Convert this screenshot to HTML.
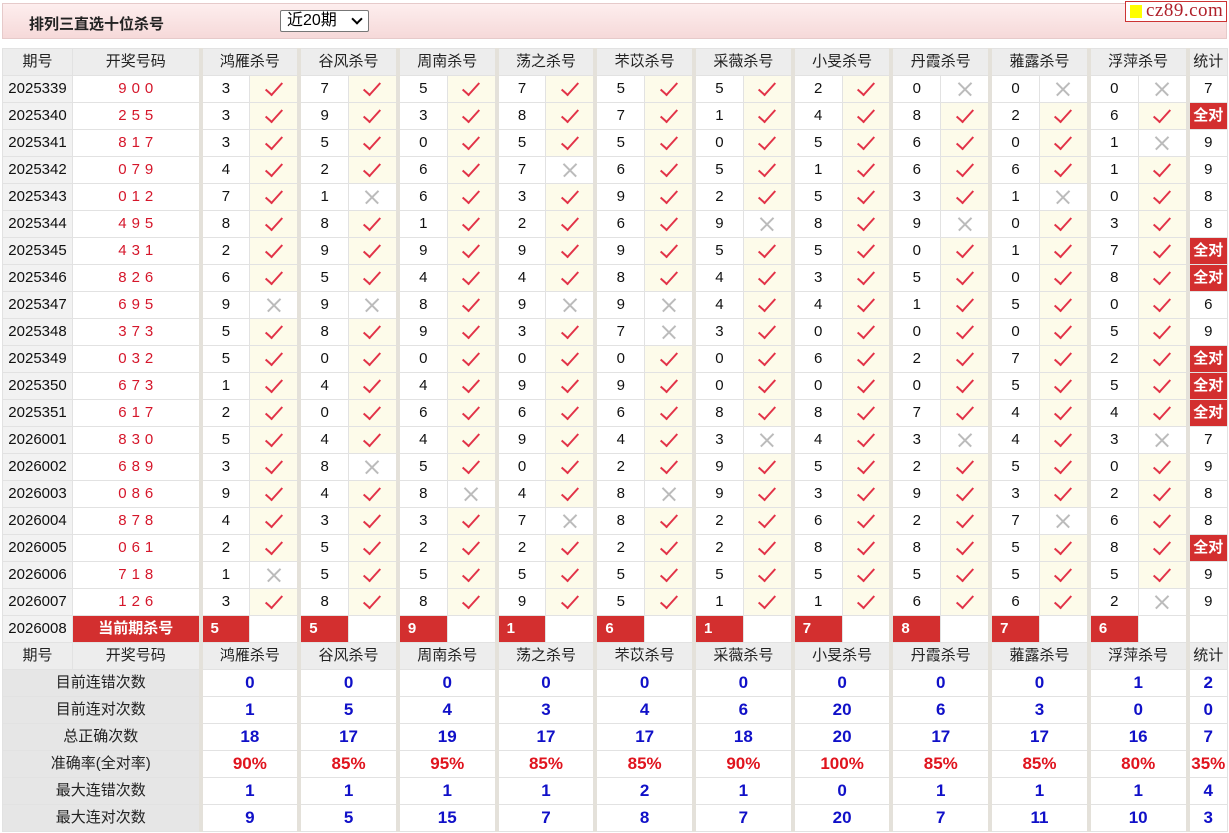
<!DOCTYPE html>
<html><head><meta charset="utf-8"><style>
body{margin:0;background:#fff;font-family:"Liberation Sans","Noto Sans CJK SC",sans-serif;width:1229px;height:833px;overflow:hidden;position:relative}
.bar{position:absolute;left:2px;top:3px;width:1225px;height:36px;background:linear-gradient(#fdeeee,#f6d9d9);border:1px solid #e6caca;box-sizing:border-box}
.bar b{position:absolute;left:26px;top:9px;font-size:15px;color:#222}
.sel{position:absolute;left:277px;top:6px;width:89px;height:22px;border:1px solid #777;border-radius:2px;background:#fff;box-sizing:border-box;font-size:16px;line-height:20px;padding-left:6px;color:#000}
.sel i{position:absolute;right:7px;top:4px;width:6px;height:6px;border-right:2px solid #000;border-bottom:2px solid #000;transform:rotate(45deg)}
.logo{position:absolute;left:1125px;top:1px;width:102px;height:21px;border:1px solid #c33;background:#fff;box-sizing:border-box;font-family:"Liberation Serif",serif;font-size:19px;color:#b0202a;line-height:18px;padding-left:20px;letter-spacing:0.5px}
.logo:before{content:"";position:absolute;left:4px;top:3px;width:12px;height:13px;background:#ff0}
table{position:absolute;left:2px;top:48px;border-collapse:collapse;table-layout:fixed;width:1225px}
tr{height:27px}
td{height:26px;line-height:20px;padding:0;border:1px solid #e2e2e2;text-align:center;font-size:15px;color:#111;white-space:nowrap;overflow:hidden;position:relative}
tr.h td{background:#ededed;color:#222}
td.p{background:#f2f2f2}
td.k{color:#d5162a;letter-spacing:5px;padding-left:5px}
td.n{border-left:4px solid #e4e1da}
td.y{background:#fdfbea}
td.y:before{content:"";position:absolute;left:50%;top:50%;width:7px;height:15px;border-right:2px solid #e23348;border-bottom:2px solid #e23348;transform:translate(-50%,-62%) rotate(42deg)}
td.x:before,td.x:after{content:"";position:absolute;left:50%;top:50%;width:18px;height:1.5px;background:#bbb;transform:translate(-50%,-50%) rotate(45deg)}
td.x:after{transform:translate(-50%,-50%) rotate(-45deg)}
td.q{background:#d32f2f;color:#fff;font-weight:bold;text-align:left;padding-left:8px}
td.a{background:#d32f2f;color:#fff;font-weight:bold}
td.c{background:#d32f2f;color:#fff;font-weight:bold}
td.l{background:#e6e6e6;color:#222}
td.s{border-left:4px solid #e4e1da;color:#1010c8;font-weight:bold;font-size:17px}
td.r{color:#e0141e}
</style></head><body>
<div class="bar"><b>排列三直选十位杀号</b><div class="sel">近20期<i></i></div></div>
<div class="logo">cz89.com</div>
<table>
<colgroup><col style="width:70px"><col style="width:128px"><col span="20" style="width:49.35px"><col style="width:40px"></colgroup>
<tr class="h"><td>期号</td><td>开奖号码</td><td class="n" colspan="2">鸿雁杀号</td><td class="n" colspan="2">谷风杀号</td><td class="n" colspan="2">周南杀号</td><td class="n" colspan="2">荡之杀号</td><td class="n" colspan="2">芣苡杀号</td><td class="n" colspan="2">采薇杀号</td><td class="n" colspan="2">小旻杀号</td><td class="n" colspan="2">丹霞杀号</td><td class="n" colspan="2">蕥露杀号</td><td class="n" colspan="2">浮萍杀号</td><td class="n">统计</td></tr>
<tr><td class="p">2025339</td><td class="k">900</td><td class="n">3</td><td class="y"></td><td class="n">7</td><td class="y"></td><td class="n">5</td><td class="y"></td><td class="n">7</td><td class="y"></td><td class="n">5</td><td class="y"></td><td class="n">5</td><td class="y"></td><td class="n">2</td><td class="y"></td><td class="n">0</td><td class="x"></td><td class="n">0</td><td class="x"></td><td class="n">0</td><td class="x"></td><td class="n">7</td></tr>
<tr><td class="p">2025340</td><td class="k">255</td><td class="n">3</td><td class="y"></td><td class="n">9</td><td class="y"></td><td class="n">3</td><td class="y"></td><td class="n">8</td><td class="y"></td><td class="n">7</td><td class="y"></td><td class="n">1</td><td class="y"></td><td class="n">4</td><td class="y"></td><td class="n">8</td><td class="y"></td><td class="n">2</td><td class="y"></td><td class="n">6</td><td class="y"></td><td class="n a">全对</td></tr>
<tr><td class="p">2025341</td><td class="k">817</td><td class="n">3</td><td class="y"></td><td class="n">5</td><td class="y"></td><td class="n">0</td><td class="y"></td><td class="n">5</td><td class="y"></td><td class="n">5</td><td class="y"></td><td class="n">0</td><td class="y"></td><td class="n">5</td><td class="y"></td><td class="n">6</td><td class="y"></td><td class="n">0</td><td class="y"></td><td class="n">1</td><td class="x"></td><td class="n">9</td></tr>
<tr><td class="p">2025342</td><td class="k">079</td><td class="n">4</td><td class="y"></td><td class="n">2</td><td class="y"></td><td class="n">6</td><td class="y"></td><td class="n">7</td><td class="x"></td><td class="n">6</td><td class="y"></td><td class="n">5</td><td class="y"></td><td class="n">1</td><td class="y"></td><td class="n">6</td><td class="y"></td><td class="n">6</td><td class="y"></td><td class="n">1</td><td class="y"></td><td class="n">9</td></tr>
<tr><td class="p">2025343</td><td class="k">012</td><td class="n">7</td><td class="y"></td><td class="n">1</td><td class="x"></td><td class="n">6</td><td class="y"></td><td class="n">3</td><td class="y"></td><td class="n">9</td><td class="y"></td><td class="n">2</td><td class="y"></td><td class="n">5</td><td class="y"></td><td class="n">3</td><td class="y"></td><td class="n">1</td><td class="x"></td><td class="n">0</td><td class="y"></td><td class="n">8</td></tr>
<tr><td class="p">2025344</td><td class="k">495</td><td class="n">8</td><td class="y"></td><td class="n">8</td><td class="y"></td><td class="n">1</td><td class="y"></td><td class="n">2</td><td class="y"></td><td class="n">6</td><td class="y"></td><td class="n">9</td><td class="x"></td><td class="n">8</td><td class="y"></td><td class="n">9</td><td class="x"></td><td class="n">0</td><td class="y"></td><td class="n">3</td><td class="y"></td><td class="n">8</td></tr>
<tr><td class="p">2025345</td><td class="k">431</td><td class="n">2</td><td class="y"></td><td class="n">9</td><td class="y"></td><td class="n">9</td><td class="y"></td><td class="n">9</td><td class="y"></td><td class="n">9</td><td class="y"></td><td class="n">5</td><td class="y"></td><td class="n">5</td><td class="y"></td><td class="n">0</td><td class="y"></td><td class="n">1</td><td class="y"></td><td class="n">7</td><td class="y"></td><td class="n a">全对</td></tr>
<tr><td class="p">2025346</td><td class="k">826</td><td class="n">6</td><td class="y"></td><td class="n">5</td><td class="y"></td><td class="n">4</td><td class="y"></td><td class="n">4</td><td class="y"></td><td class="n">8</td><td class="y"></td><td class="n">4</td><td class="y"></td><td class="n">3</td><td class="y"></td><td class="n">5</td><td class="y"></td><td class="n">0</td><td class="y"></td><td class="n">8</td><td class="y"></td><td class="n a">全对</td></tr>
<tr><td class="p">2025347</td><td class="k">695</td><td class="n">9</td><td class="x"></td><td class="n">9</td><td class="x"></td><td class="n">8</td><td class="y"></td><td class="n">9</td><td class="x"></td><td class="n">9</td><td class="x"></td><td class="n">4</td><td class="y"></td><td class="n">4</td><td class="y"></td><td class="n">1</td><td class="y"></td><td class="n">5</td><td class="y"></td><td class="n">0</td><td class="y"></td><td class="n">6</td></tr>
<tr><td class="p">2025348</td><td class="k">373</td><td class="n">5</td><td class="y"></td><td class="n">8</td><td class="y"></td><td class="n">9</td><td class="y"></td><td class="n">3</td><td class="y"></td><td class="n">7</td><td class="x"></td><td class="n">3</td><td class="y"></td><td class="n">0</td><td class="y"></td><td class="n">0</td><td class="y"></td><td class="n">0</td><td class="y"></td><td class="n">5</td><td class="y"></td><td class="n">9</td></tr>
<tr><td class="p">2025349</td><td class="k">032</td><td class="n">5</td><td class="y"></td><td class="n">0</td><td class="y"></td><td class="n">0</td><td class="y"></td><td class="n">0</td><td class="y"></td><td class="n">0</td><td class="y"></td><td class="n">0</td><td class="y"></td><td class="n">6</td><td class="y"></td><td class="n">2</td><td class="y"></td><td class="n">7</td><td class="y"></td><td class="n">2</td><td class="y"></td><td class="n a">全对</td></tr>
<tr><td class="p">2025350</td><td class="k">673</td><td class="n">1</td><td class="y"></td><td class="n">4</td><td class="y"></td><td class="n">4</td><td class="y"></td><td class="n">9</td><td class="y"></td><td class="n">9</td><td class="y"></td><td class="n">0</td><td class="y"></td><td class="n">0</td><td class="y"></td><td class="n">0</td><td class="y"></td><td class="n">5</td><td class="y"></td><td class="n">5</td><td class="y"></td><td class="n a">全对</td></tr>
<tr><td class="p">2025351</td><td class="k">617</td><td class="n">2</td><td class="y"></td><td class="n">0</td><td class="y"></td><td class="n">6</td><td class="y"></td><td class="n">6</td><td class="y"></td><td class="n">6</td><td class="y"></td><td class="n">8</td><td class="y"></td><td class="n">8</td><td class="y"></td><td class="n">7</td><td class="y"></td><td class="n">4</td><td class="y"></td><td class="n">4</td><td class="y"></td><td class="n a">全对</td></tr>
<tr><td class="p">2026001</td><td class="k">830</td><td class="n">5</td><td class="y"></td><td class="n">4</td><td class="y"></td><td class="n">4</td><td class="y"></td><td class="n">9</td><td class="y"></td><td class="n">4</td><td class="y"></td><td class="n">3</td><td class="x"></td><td class="n">4</td><td class="y"></td><td class="n">3</td><td class="x"></td><td class="n">4</td><td class="y"></td><td class="n">3</td><td class="x"></td><td class="n">7</td></tr>
<tr><td class="p">2026002</td><td class="k">689</td><td class="n">3</td><td class="y"></td><td class="n">8</td><td class="x"></td><td class="n">5</td><td class="y"></td><td class="n">0</td><td class="y"></td><td class="n">2</td><td class="y"></td><td class="n">9</td><td class="y"></td><td class="n">5</td><td class="y"></td><td class="n">2</td><td class="y"></td><td class="n">5</td><td class="y"></td><td class="n">0</td><td class="y"></td><td class="n">9</td></tr>
<tr><td class="p">2026003</td><td class="k">086</td><td class="n">9</td><td class="y"></td><td class="n">4</td><td class="y"></td><td class="n">8</td><td class="x"></td><td class="n">4</td><td class="y"></td><td class="n">8</td><td class="x"></td><td class="n">9</td><td class="y"></td><td class="n">3</td><td class="y"></td><td class="n">9</td><td class="y"></td><td class="n">3</td><td class="y"></td><td class="n">2</td><td class="y"></td><td class="n">8</td></tr>
<tr><td class="p">2026004</td><td class="k">878</td><td class="n">4</td><td class="y"></td><td class="n">3</td><td class="y"></td><td class="n">3</td><td class="y"></td><td class="n">7</td><td class="x"></td><td class="n">8</td><td class="y"></td><td class="n">2</td><td class="y"></td><td class="n">6</td><td class="y"></td><td class="n">2</td><td class="y"></td><td class="n">7</td><td class="x"></td><td class="n">6</td><td class="y"></td><td class="n">8</td></tr>
<tr><td class="p">2026005</td><td class="k">061</td><td class="n">2</td><td class="y"></td><td class="n">5</td><td class="y"></td><td class="n">2</td><td class="y"></td><td class="n">2</td><td class="y"></td><td class="n">2</td><td class="y"></td><td class="n">2</td><td class="y"></td><td class="n">8</td><td class="y"></td><td class="n">8</td><td class="y"></td><td class="n">5</td><td class="y"></td><td class="n">8</td><td class="y"></td><td class="n a">全对</td></tr>
<tr><td class="p">2026006</td><td class="k">718</td><td class="n">1</td><td class="x"></td><td class="n">5</td><td class="y"></td><td class="n">5</td><td class="y"></td><td class="n">5</td><td class="y"></td><td class="n">5</td><td class="y"></td><td class="n">5</td><td class="y"></td><td class="n">5</td><td class="y"></td><td class="n">5</td><td class="y"></td><td class="n">5</td><td class="y"></td><td class="n">5</td><td class="y"></td><td class="n">9</td></tr>
<tr><td class="p">2026007</td><td class="k">126</td><td class="n">3</td><td class="y"></td><td class="n">8</td><td class="y"></td><td class="n">8</td><td class="y"></td><td class="n">9</td><td class="y"></td><td class="n">5</td><td class="y"></td><td class="n">1</td><td class="y"></td><td class="n">1</td><td class="y"></td><td class="n">6</td><td class="y"></td><td class="n">6</td><td class="y"></td><td class="n">2</td><td class="x"></td><td class="n">9</td></tr>
<tr><td class="p">2026008</td><td class="c">当前期杀号</td><td class="n q">5</td><td></td><td class="n q">5</td><td></td><td class="n q">9</td><td></td><td class="n q">1</td><td></td><td class="n q">6</td><td></td><td class="n q">1</td><td></td><td class="n q">7</td><td></td><td class="n q">8</td><td></td><td class="n q">7</td><td></td><td class="n q">6</td><td></td><td class="n"></td></tr>
<tr class="h"><td>期号</td><td>开奖号码</td><td class="n" colspan="2">鸿雁杀号</td><td class="n" colspan="2">谷风杀号</td><td class="n" colspan="2">周南杀号</td><td class="n" colspan="2">荡之杀号</td><td class="n" colspan="2">芣苡杀号</td><td class="n" colspan="2">采薇杀号</td><td class="n" colspan="2">小旻杀号</td><td class="n" colspan="2">丹霞杀号</td><td class="n" colspan="2">蕥露杀号</td><td class="n" colspan="2">浮萍杀号</td><td class="n">统计</td></tr>
<tr><td class="l" colspan="2">目前连错次数</td><td class="s" colspan="2">0</td><td class="s" colspan="2">0</td><td class="s" colspan="2">0</td><td class="s" colspan="2">0</td><td class="s" colspan="2">0</td><td class="s" colspan="2">0</td><td class="s" colspan="2">0</td><td class="s" colspan="2">0</td><td class="s" colspan="2">0</td><td class="s" colspan="2">1</td><td class="s">2</td></tr>
<tr><td class="l" colspan="2">目前连对次数</td><td class="s" colspan="2">1</td><td class="s" colspan="2">5</td><td class="s" colspan="2">4</td><td class="s" colspan="2">3</td><td class="s" colspan="2">4</td><td class="s" colspan="2">6</td><td class="s" colspan="2">20</td><td class="s" colspan="2">6</td><td class="s" colspan="2">3</td><td class="s" colspan="2">0</td><td class="s">0</td></tr>
<tr><td class="l" colspan="2">总正确次数</td><td class="s" colspan="2">18</td><td class="s" colspan="2">17</td><td class="s" colspan="2">19</td><td class="s" colspan="2">17</td><td class="s" colspan="2">17</td><td class="s" colspan="2">18</td><td class="s" colspan="2">20</td><td class="s" colspan="2">17</td><td class="s" colspan="2">17</td><td class="s" colspan="2">16</td><td class="s">7</td></tr>
<tr><td class="l" colspan="2">准确率(全对率)</td><td class="s r" colspan="2">90%</td><td class="s r" colspan="2">85%</td><td class="s r" colspan="2">95%</td><td class="s r" colspan="2">85%</td><td class="s r" colspan="2">85%</td><td class="s r" colspan="2">90%</td><td class="s r" colspan="2">100%</td><td class="s r" colspan="2">85%</td><td class="s r" colspan="2">85%</td><td class="s r" colspan="2">80%</td><td class="s r">35%</td></tr>
<tr><td class="l" colspan="2">最大连错次数</td><td class="s" colspan="2">1</td><td class="s" colspan="2">1</td><td class="s" colspan="2">1</td><td class="s" colspan="2">1</td><td class="s" colspan="2">2</td><td class="s" colspan="2">1</td><td class="s" colspan="2">0</td><td class="s" colspan="2">1</td><td class="s" colspan="2">1</td><td class="s" colspan="2">1</td><td class="s">4</td></tr>
<tr><td class="l" colspan="2">最大连对次数</td><td class="s" colspan="2">9</td><td class="s" colspan="2">5</td><td class="s" colspan="2">15</td><td class="s" colspan="2">7</td><td class="s" colspan="2">8</td><td class="s" colspan="2">7</td><td class="s" colspan="2">20</td><td class="s" colspan="2">7</td><td class="s" colspan="2">11</td><td class="s" colspan="2">10</td><td class="s">3</td></tr>
</table>
</body></html>
